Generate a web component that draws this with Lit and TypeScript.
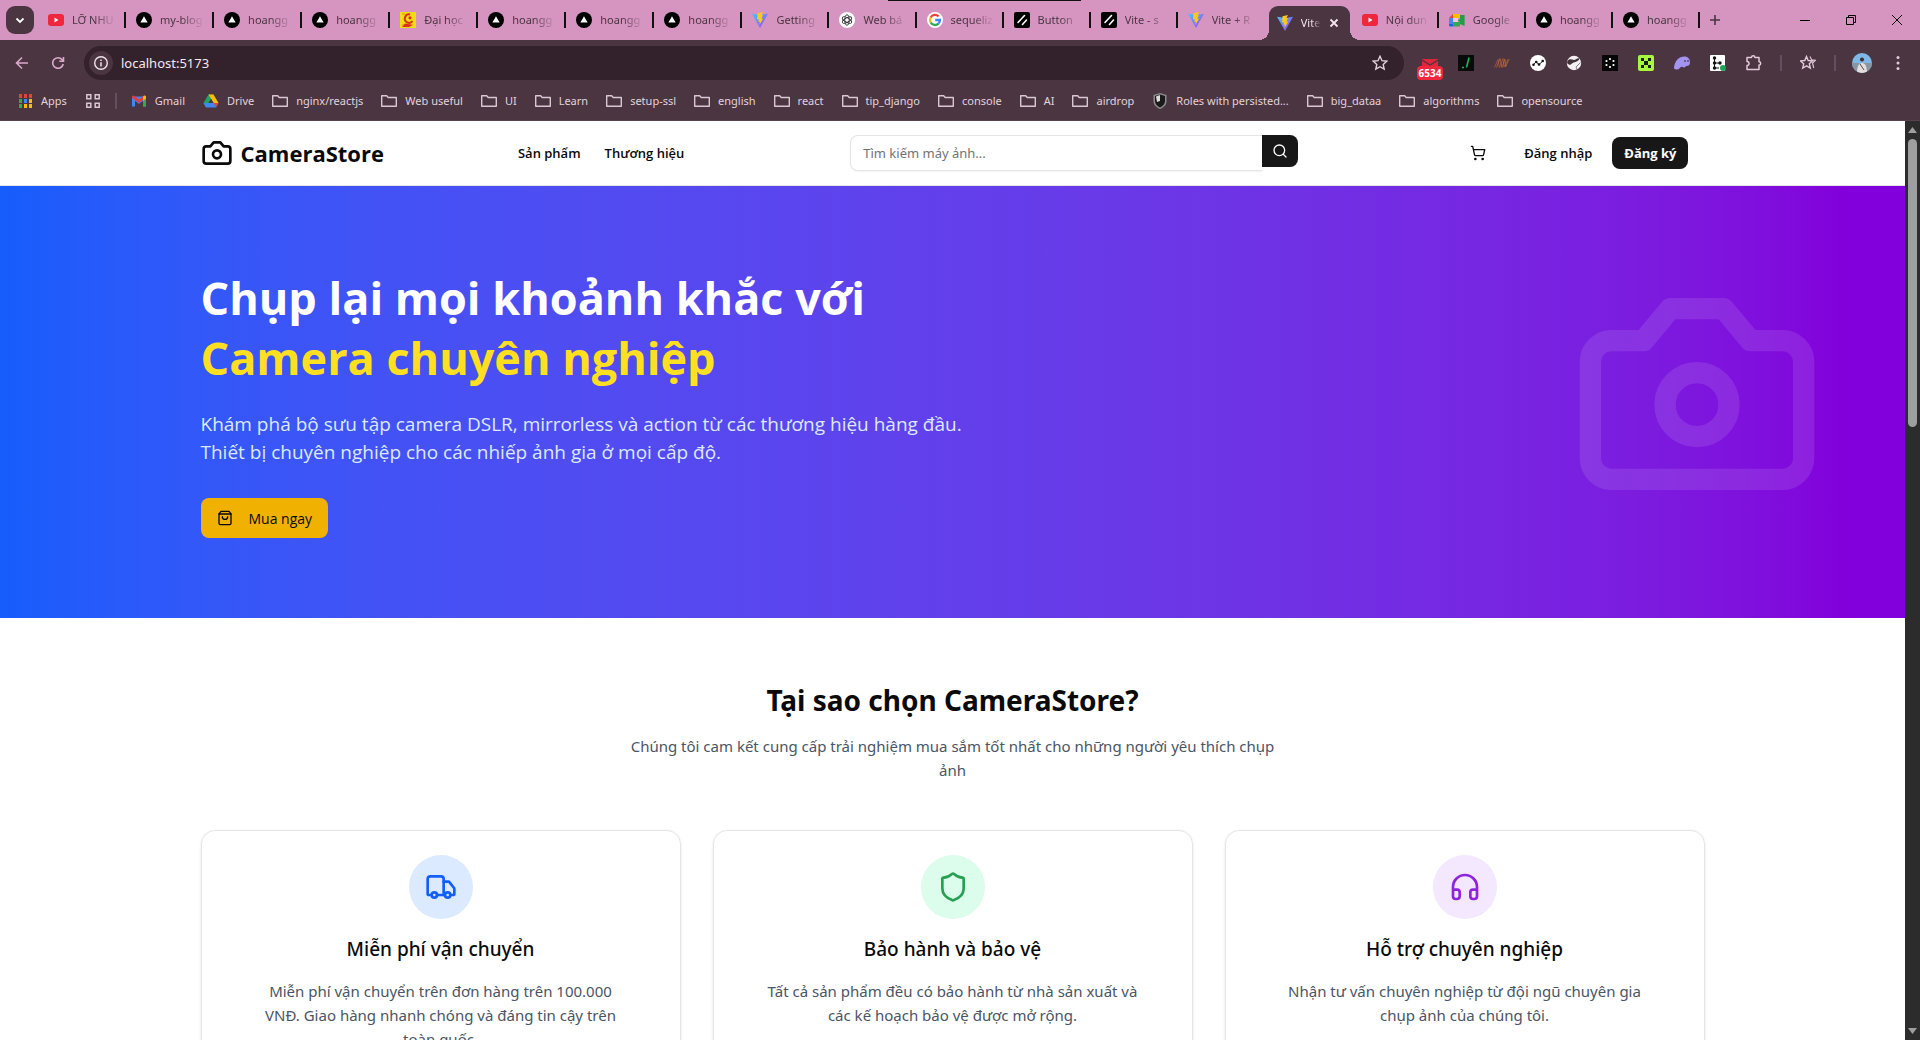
import { LitElement, html, svg, css, nothing, TemplateResult, SVGTemplateResult } from "lit";
import { customElement } from "lit/decorators.js";
import { classMap } from "lit/directives/class-map.js";

const box = (inner: SVGTemplateResult, cls = "i16", view = "0 0 16 16") =>
  html`<svg class=${cls} viewBox=${view} aria-hidden="true">${inner}</svg>`;

const line = (inner: SVGTemplateResult, cls: string) =>
  html`<svg class="line ${cls}" viewBox="0 0 24 24" aria-hidden="true">${inner}</svg>`;

/* ---- site icons ---- */
const camera = svg`<path d="M14.5 4h-5L7 7H4a2 2 0 0 0-2 2v9a2 2 0 0 0 2 2h16a2 2 0 0 0 2-2V9a2 2 0 0 0-2-2h-3l-2.5-3z"/><circle cx="12" cy="13" r="3"/>`;
const search = svg`<circle cx="11" cy="11" r="8"/><path d="m21 21-4.3-4.3"/>`;
const cart = svg`<circle cx="8" cy="21" r="1"/><circle cx="19" cy="21" r="1"/><path d="M2.05 2.05h2l2.66 12.42a2 2 0 0 0 2 1.58h9.78a2 2 0 0 0 1.95-1.57l1.65-7.43H5.12"/>`;
const bag = svg`<path d="M6 2 3 6v14a2 2 0 0 0 2 2h14a2 2 0 0 0 2-2V6l-3-4Z"/><path d="M3 6h18"/><path d="M16 10a4 4 0 0 1-8 0"/>`;
const truck = svg`<path d="M14 18V6a2 2 0 0 0-2-2H4a2 2 0 0 0-2 2v11a1 1 0 0 0 1 1h2"/><path d="M15 18H9"/><path d="M19 18h2a1 1 0 0 0 1-1v-3.65a1 1 0 0 0-.22-.624l-3.48-4.35A1 1 0 0 0 17.52 8H14"/><circle cx="17" cy="18" r="2"/><circle cx="7" cy="18" r="2"/>`;
const shield = svg`<path d="M20 13c0 5-3.5 7.5-7.66 8.95a1 1 0 0 1-.67-.01C7.5 20.5 4 18 4 13V6a1 1 0 0 1 1-1c2 0 4.5-1.2 6.24-2.72a1.17 1.17 0 0 1 1.52 0C14.51 3.81 17 5 19 5a1 1 0 0 1 1 1z"/>`;
const headphones = svg`<path d="M3 14h3a2 2 0 0 1 2 2v3a2 2 0 0 1-2 2H5a2 2 0 0 1-2-2v-7a9 9 0 0 1 18 0v7a2 2 0 0 1-2 2h-1a2 2 0 0 1-2-2v-3a2 2 0 0 1 2-2h3"/>`;

/* ---- favicons ---- */
const fav: Record<string, SVGTemplateResult> = {
  youtube: svg`<rect y="2" width="16" height="12" rx="3" fill="#f0273c"/><path d="M6.5 5.5v5l4-2.5z" fill="#fff"/>`,
  vercel: svg`<circle cx="8" cy="8" r="8" fill="#000"/><path d="M8 4.2 11.6 10.6H4.4z" fill="#fff"/>`,
  school: svg`<rect width="16" height="16" fill="#f2dc13"/><path d="M10 2.500a4.200 4.200 0 1 0 2.500 6.500" fill="none" stroke="#dd2f1c" stroke-width="2"/><circle cx="10" cy="5.800" r="1.600" fill="#dd2f1c"/><path d="M2 15 5 11.500l8 1.200L9 15z" fill="#dd2f1c"/><path d="M2 2h3M2 13h2" stroke="#e98a10"/>`,
  vite: svg`<defs><linearGradient id="v" x1="0" y1="0" x2="1" y2="1"><stop offset="0" stop-color="#41c5ff"/><stop offset="1" stop-color="#a63cf5"/></linearGradient></defs><path d="M0 1.800 8 16 16 1.800 8.500 3z" fill="url(#v)"/><path d="M11 0 5.500 1.200 5 7.500l1.800-.3L6.300 10l1.600-.4L7.300 13l4-6.600-1.900.3L11 3l-1.700.3z" fill="#ffc81e"/>`,
  gpt: svg`<circle cx="8" cy="8" r="8" fill="#fff"/><g fill="none" stroke="#333" stroke-width=".9"><ellipse cx="8" cy="8" rx="2.200" ry="5.200"/><ellipse cx="8" cy="8" rx="2.200" ry="5.200" transform="rotate(60 8 8)"/><ellipse cx="8" cy="8" rx="2.200" ry="5.200" transform="rotate(120 8 8)"/></g>`,
  google: svg`<circle cx="8" cy="8" r="8" fill="#fff"/><g fill="none" stroke-width="2.300"><path d="M11.600 4.400A5 5 0 0 0 3.700 5.500" stroke="#ea4335"/><path d="M3.700 5.500a5 5 0 0 0 0 5" stroke="#fbbc05"/><path d="M3.700 10.500a5 5 0 0 0 7.700 1.200" stroke="#34a853"/><path d="M11.400 11.700A5 5 0 0 0 13 8H8.200" stroke="#4285f4"/></g>`,
  shadcn: svg`<rect width="16" height="16" rx="2" fill="#000"/><path d="M12.500 8 8.500 12.500M10.500 3.500 4 10.500" stroke="#fff" stroke-width="1.600" stroke-linecap="round"/>`,
  meet: svg`<path d="M4 2h7v4H4z" fill="#fbbc04"/><path d="M4 2v4H0z" fill="#ea4335"/><path d="M0 6h4v6H0z" fill="#4285f4"/><path d="M0 12h4v2.500H1.500A1.500 1.500 0 0 1 0 13z" fill="#1967d2"/><path d="M4 10h7v4.500H4z" fill="#34a853"/><path d="M11 3v4L8.500 8.500 11 10v2l4.600 2V3z" fill="#1e9e4a"/><path d="M4 6h5v4H4z" fill="#f4c6dd"/>`,
};

const TABS: [string, string][] = [
  ["youtube", "LỠ NHU"], ["vercel", "my-blog"], ["vercel", "hoangg"], ["vercel", "hoangg"],
  ["school", "Đại học"], ["vercel", "hoangg"], ["vercel", "hoangg"], ["vercel", "hoangg"],
  ["vite", "Getting"], ["gpt", "Web bá"], ["google", "sequeliz"], ["shadcn", "Button"],
  ["shadcn", "Vite - s"], ["vite", "Vite + R"], ["vite", "Vite"], ["youtube", "Nội dun"],
  ["meet", "Google"], ["vercel", "hoangg"], ["vercel", "hoangg"],
];
const ACTIVE = 14;

/* ---- toolbar extension icons ---- */
const EXT: [string, SVGTemplateResult][] = [
  ["Terminal", svg`<rect width="16" height="16" fill="#070b09"/><path d="M11 2.500 8.500 12.500M4 12.500h2" stroke="#1fb455" stroke-width="1.600"/>`],
  ["Notes", svg`<path d="M.5 12.500 4 4.500l1.500 8 3.500-9 1 8.500 4-7.500" fill="none" stroke="#a54c46" stroke-width="1"/><path d="M2.500 12.500 6 3.500l2 9 3-8.500.500 8 3.500-8" fill="none" stroke="#b9762f" stroke-width=".7"/>`],
  ["Graph", svg`<circle cx="8" cy="8" r="8" fill="#fff"/><path d="M3 10 6 7l3 2.500L13 6" fill="none" stroke="#111" stroke-width=".9"/><g fill="#111"><circle cx="3.500" cy="9.800" r="1.300"/><circle cx="6.200" cy="7" r="1.300"/><circle cx="9" cy="9.500" r="1.300"/><circle cx="12.700" cy="6" r="1.300"/></g>`],
  ["Globe", svg`<circle cx="8" cy="8" r="7.200" fill="#f4eff2"/><path d="M1.500 6C4 3 6 5 8 5s3-2.500 5.800-1.500C11 8 8 6.500 6 8.500S3 10 1 8z" fill="#43333d"/><path d="M14.500 7.500 10 12l1 2.500" fill="none" stroke="#8b7d86"/>`],
  ["Dots", svg`<rect width="16" height="16" fill="#060606"/><g fill="#fff"><circle cx="8" cy="4" r="1.100"/><circle cx="8" cy="12" r="1.100"/><circle cx="4.500" cy="6" r="1.100"/><circle cx="11.500" cy="6" r="1.100"/><circle cx="4.500" cy="10" r="1.100"/><circle cx="11.500" cy="10" r="1.100"/></g>`],
  ["Grid", svg`<rect width="16" height="16" rx="2" fill="#a6f83f"/><path d="M3 3h3v3H3zM10 3h3v3h-3zM6 6h4v4H6zM3 10h3v3H3zM10 10h3v3h-3z" fill="#16230a"/>`],
  ["Ghost", svg`<path d="M0 14C0 6 5 1.500 10.500 1.500 14 1.500 16 4 16 7c0 3-1.500 4-3.500 4-1 0-1 1.500-2.500 1.500S8 11.500 7 12s-2 2.500-4 2.500S1 13 0 14z" fill="#a394f1"/><path d="M11 5v2M14 5v2" stroke="#4b3742" stroke-width="1.200"/>`],
  ["Tree", svg`<rect width="15" height="16" rx="1" fill="#fff"/><path d="M4.500 3v10M4.500 8H10M4.500 13H9" stroke="#111" stroke-width="1"/><g fill="#111"><circle cx="4.500" cy="3" r="1.700"/><circle cx="4.500" cy="8" r="1.700"/><circle cx="4.500" cy="13" r="1.700"/><circle cx="10" cy="8" r="1.700"/></g><circle cx="13" cy="13" r="3" fill="#1fa35a"/>`],
];

const folder = svg`<path d="M.7 2.800h5l1.500 1.700h8.100v8.700H.7z" fill="none" stroke="#d9c8d3" stroke-width="1.400" stroke-linejoin="round"/>`;
const gmail = svg`<path d="M1 3.500v10h3V8l4 3 4-3v5.500h3v-10z" fill="#4285f4"/><path d="M12 13.500h3V4l-3 3z" fill="#34a853"/><path d="M1 4.500 8 10l7-5.500V4a1.500 1.500 0 0 0-2.500-1L8 6.500 3.500 3A1.500 1.500 0 0 0 1 4z" fill="#ea3a35"/><path d="M12 4v4l3-2.500V4a1.500 1.500 0 0 0-3 0z" fill="#fbbc04"/><path d="M4 8.200 8 11.200l4-3v5.300H4z" fill="#4a3541"/>`;
const drive = svg`<path d="M5.500 1.500h5L5.200 11l-2.600 3L.5 10z" fill="#1fa463"/><path d="M5.500 1.500h5l5 8.500h-5z" fill="#fbbc04"/><path d="M.5 10h15l-2.500 4.500H3z" fill="#4285f4"/><path d="M8 6 5.500 10h5z" fill="#4b3742"/><path d="M10.500 10h5L13 14z" fill="#ea4335"/>`;
const roles = svg`<path d="M8 0 14.500 2v6c0 4-3 6.500-6.500 8C4.500 14.500 1.500 12 1.500 8V2z" fill="#8c8c8c"/><path d="M8 1.500 13 3v5c0 3-2 5-5 6.500C5 13 3 11 3 8V3z" fill="#1a1a1a"/><path d="M4 3.500 8 2v6L5 9z" fill="#dcdcdc"/>`;

const BOOKMARKS: [string, SVGTemplateResult][] = [
  ["Gmail", gmail], ["Drive", drive], ["nginx/reactjs", folder], ["Web useful", folder], ["UI", folder],
  ["Learn", folder], ["setup-ssl", folder], ["english", folder], ["react", folder], ["tip_django", folder],
  ["console", folder], ["AI", folder], ["airdrop", folder], ["Roles with persisted...", roles],
  ["big_dataa", folder], ["algorithms", folder], ["opensource", folder],
];

const APP_DOTS = ["#e94235", "#e94235", "#e94235", "#34a853", "#4285f4", "#fbbc04", "#34a853", "#fbbc04", "#fbbc04"];

@customElement("browser-chrome")
export class BrowserChrome extends LitElement {
  static styles = css`
    :host { display: block; font-family: "Noto Sans", "Open Sans", sans-serif; background: #4a3541; color: #e3d3dd; }
    button { font: inherit; color: inherit; background: none; border: 0; padding: 0; display: grid; place-items: center; flex: none; }
    a { color: inherit; text-decoration: none; }
    svg { display: block; flex: none; }
    .i10 { width: 10px; height: 10px; }
    .i16 { width: 16px; height: 16px; }
    .i20 { width: 20px; height: 20px; }

    .strip { position: relative; display: flex; align-items: center; height: 40px; background: #d694c0; color: #4a3541; }
    .drag { position: absolute; left: 888px; top: 0; width: 193px; height: 1px; background: #111; }
    .finder { width: 28px; height: 28px; margin: 0 4px 0 6px; border-radius: 9px; background: #4a3541; color: #fff; }
    .tabs { flex: 1; min-width: 0; display: grid; grid-template-columns: repeat(8, minmax(0, 88fr)) repeat(11, minmax(0, 87fr)); height: 40px; }
    .tab { display: flex; align-items: center; gap: 8px; padding-left: 10px; font-size: 11px; min-width: 0; }
    .title { flex: 1; min-width: 0; overflow: hidden; white-space: nowrap; line-height: 20px; mask-image: linear-gradient(to right, #000 50%, transparent); }
    .tab::after { content: ""; width: 2px; height: 16px; background: #111; }
    .tab.quiet::after { background: none; }
    .tab.active { position: relative; height: 34px; margin: 6px 2px 0 4px; padding: 0 11px 0 8px; border-radius: 9px 9px 0 0; background: #4a3541; color: #f3e6ee; }
    .tab.active::before, .tab.active::after { content: ""; position: absolute; bottom: 0; width: 10px; height: 10px; }
    .tab.active::before { right: 100%; background: radial-gradient(circle at 0 0, transparent 10px, #4a3541 10px); }
    .tab.active::after { left: 100%; background: radial-gradient(circle at 100% 0, transparent 10px, #4a3541 10px); }
    .new { width: 28px; height: 28px; margin: 0 53px 0 1px; }
    .win { width: 46px; height: 32px; color: #000; }

    .bar { display: flex; align-items: center; height: 46px; padding: 0 4px; }
    .nav { width: 36px; height: 34px; color: #dba9cb; }
    .nav.pale { color: #e3c9da; }
    .omni { flex: 1; display: flex; align-items: center; height: 34px; margin: 0 8px; padding: 0 16px 0 5px; border-radius: 17px; background: #33212c; }
    .info { width: 24px; height: 24px; border-radius: 12px; background: #4a3541; color: #f0e4ec; }
    .url { flex: 1; min-width: 0; margin: 0 8px; padding: 0; border: 0; outline: 0; background: none; color: #f4e9f1; font: 13px "Noto Sans", sans-serif; }
    .star { color: #e3d3dd; }
    .mail { display: flex; flex-direction: column; align-items: center; justify-content: flex-end; }
    .badge { padding: 0 2px; border-radius: 4px; background: #f0273c; color: #fff; font: 700 10px/14px "Open Sans", sans-serif; }
    .rule { width: 2px; height: 16px; margin: 0 8px; background: #63505c; flex: none; }

    .marks { box-sizing: border-box; display: flex; align-items: center; gap: 18px; height: 35px; padding: 0 17px 5px; border-bottom: 1px solid #55424d; overflow: hidden; font-size: 11px; line-height: 16px; white-space: nowrap; }
    .mark { display: flex; align-items: center; gap: 8px; flex: none; }
    .marks .rule { margin: 0 -4px; }
  `;

  private tab([icon, title]: [string, string], i: number) {
    const active = i === ACTIVE;
    return html`<div role="tab" aria-selected=${active} class=${classMap({ tab: true, active, quiet: i === ACTIVE - 1 })}>
      ${box(fav[icon])}<span class="title">${title}</span>
      ${active ? html`<button aria-label="Close tab">${box(svg`<path d="M1.500 1.500 8.500 8.500M8.500 1.500 1.500 8.500" stroke="currentColor" stroke-width="1.800"/>`, "i10", "0 0 10 10")}</button>` : nothing}
    </div>`;
  }

  render() {
    return html`
      <div class="strip">
        <button class="finder" aria-label="Search tabs">${box(svg`<path d="m4.500 6.500 3.500 3.500 3.500-3.500" fill="none" stroke="currentColor" stroke-width="1.800"/>`)}</button>
        <div class="tabs" role="tablist">${TABS.map((t, i) => this.tab(t, i))}</div>
        <button class="new" aria-label="New tab">${box(svg`<path d="M8 3v10M3 8h10" stroke="currentColor" stroke-width="1.600"/>`)}</button>
        <button class="win" aria-label="Minimize">${box(svg`<path d="M3 8.500h10" stroke="currentColor"/>`)}</button>
        <button class="win" aria-label="Restore">${box(svg`<path d="M3.500 5.500h7v7h-7zM5.500 5V3.500h7v7H11" fill="none" stroke="currentColor"/>`)}</button>
        <button class="win" aria-label="Close">${box(svg`<path d="m3 3 10 10M13 3 3 13" stroke="currentColor"/>`)}</button>
        <div class="drag"></div>
      </div>
      <div class="bar">
        <button class="nav" aria-label="Back">${box(svg`<path d="M14 8H3M8 2.500 2.500 8 8 13.500" fill="none" stroke="currentColor" stroke-width="1.600"/>`)}</button>
        <button class="nav" aria-label="Reload">${box(svg`<path d="M13.200 9A5.300 5.300 0 1 1 12 4.500L13.500 6M13.500 2v4.200H9.300" fill="none" stroke="currentColor" stroke-width="1.600"/>`)}</button>
        <div class="omni">
          <button class="info" aria-label="Site information">${box(svg`<circle cx="8" cy="8" r="6.300" fill="none" stroke="currentColor" stroke-width="1.400"/><path d="M8 7.200V11.500M8 4.500V6" stroke="currentColor" stroke-width="1.500"/>`)}</button>
          <input class="url" aria-label="Address" value="localhost:5173" />
          <button class="star" aria-label="Bookmark this page">${box(svg`<path d="m8 1.300 2 4.400 4.800.5-3.600 3.200 1 4.700L8 11.700l-4.200 2.400 1-4.700L1.200 6.200 6 5.700z" fill="none" stroke="currentColor" stroke-width="1.400"/>`)}</button>
        </div>
        <button class="nav mail" aria-label="Mail">
          <svg width="16" height="7" viewBox="0 0 16 7" aria-hidden="true"><path d="M0 0h16v7H0z" fill="#e0263a"/><path d="m0 1 8 5 8-5" fill="none" stroke="#4a3541" stroke-width="1.200"/></svg>
          <span class="badge">6534</span>
        </button>
        ${EXT.map(([name, icon]) => html`<button class="nav" aria-label=${name}>${box(icon)}</button>`)}
        <button class="nav pale" aria-label="Extensions">${box(svg`<path d="M1 2.500h4.500a1.700 1.700 0 0 1 3.400 0H13v4.200a1.700 1.700 0 0 1 0 3.400v4.400H1V10.500a2 2 0 0 0 0-4z" fill="none" stroke="currentColor" stroke-width="1.500" stroke-linejoin="round"/>`)}</button>
        <span class="rule"></span>
        <button class="nav pale" aria-label="Bookmarks">${box(svg`<path d="m6.500 1.500 1.700 4 4.300.4-3.200 2.900 1 4.200-3.800-2.200L2.700 13l1-4.200L.5 5.900l4.300-.4z" fill="none" stroke="currentColor" stroke-width="1.400"/><path d="m10 1.500 1.500 3.300 4 .4-3 2.800 1.300 5" fill="none" stroke="currentColor" stroke-width="1.100"/>`)}</button>
        <span class="rule"></span>
        <button class="nav" aria-label="Profile">${box(svg`<defs><clipPath id="p"><circle cx="10" cy="10" r="10"/></clipPath></defs><g clip-path="url(#p)"><path d="M0 0h20v20H0z" fill="#7fb8e6"/><path d="M0 10h20v10H0z" fill="#8796a3"/><circle cx="10" cy="6.500" r="2" fill="#3d2d2b"/><path d="M5 20c0-6 1.500-10 5-10s5 4 5 10z" fill="#e4dedd"/><path d="m8 11 4 6" stroke="#5d4a48"/></g>`, "i20", "0 0 20 20")}</button>
        <button class="nav pale" aria-label="Menu">${box(svg`<g fill="currentColor"><circle cx="8" cy="2.500" r="1.500"/><circle cx="8" cy="8" r="1.500"/><circle cx="8" cy="13.500" r="1.500"/></g>`)}</button>
      </div>
      <nav class="marks" aria-label="Bookmarks bar">
        <a class="mark" href="#apps">${box(svg`${APP_DOTS.map((c, i) => svg`<rect x=${2 + (i % 3) * 5} y=${1 + Math.floor(i / 3) * 5} width="3" height="4" fill=${c}/>`)}`)}Apps</a>
        <button aria-label="Tab groups">${box(svg`<g fill="none" stroke="#d9c8d3" stroke-width="1.500"><path d="M1.800 1.800h4v4h-4zM10.200 1.800h4v4h-4zM1.800 10.200h4v4h-4zM10.200 10.200h4v4h-4z"/></g>`)}</button>
        <span class="rule"></span>
        ${BOOKMARKS.map(([name, icon]) => html`<a class="mark" href="#bookmark">${box(icon)}${name}</a>`)}
      </nav>`;
  }
}

const FEATURES: [string, SVGTemplateResult, string, string][] = [
  ["blue", truck, "Miễn phí vận chuyển", "Miễn phí vận chuyển trên đơn hàng trên 100.000 VNĐ. Giao hàng nhanh chóng và đáng tin cậy trên toàn quốc."],
  ["green", shield, "Bảo hành và bảo vệ", "Tất cả sản phẩm đều có bảo hành từ nhà sản xuất và các kế hoạch bảo vệ được mở rộng."],
  ["purple", headphones, "Hỗ trợ chuyên nghiệp", "Nhận tư vấn chuyên nghiệp từ đội ngũ chuyên gia chụp ảnh của chúng tôi."],
];

@customElement("store-page")
export class StorePage extends LitElement {
  static styles = css`
    :host { display: block; background: #fff; color: #0a0a0a; font-family: "Open Sans", "Noto Sans", sans-serif; }
    h1, h2, h3, p { margin: 0; }
    a { color: inherit; text-decoration: none; }
    button { font: inherit; color: inherit; background: none; border: 0; padding: 0; }
    svg { display: block; flex: none; }
    .line { fill: none; stroke: currentColor; stroke-width: 2; stroke-linecap: round; stroke-linejoin: round; }
    .s16 { width: 16px; height: 16px; }
    .s32 { width: 32px; height: 32px; }
    .wrap { box-sizing: border-box; max-width: 1536px; margin: 0 auto; padding: 0 16px; }

    header { border-bottom: 1px solid #e5e5e5; font-size: 13px; font-weight: 600; line-height: 20px; }
    header .wrap { display: flex; align-items: center; justify-content: space-between; height: 64px; }
    .logo { display: flex; align-items: center; gap: 8px; font-size: 22px; font-weight: 700; line-height: 32px; }
    .links { display: flex; padding: 0 12px; gap: 24px; }
    .find { flex: 0 1 448px; display: flex; align-items: flex-start; margin: 0 32px; }
    .find input { flex: 1; min-width: 0; height: 36px; box-sizing: border-box; padding: 0 12px; border: 1px solid #e5e5e5; border-right: 0; border-radius: 8px 0 0 8px; box-shadow: 0 1px 2px #0000000d; outline: 0; font: 400 13px "Noto Sans", sans-serif; color: inherit; }
    .find input::placeholder { color: #737373; opacity: 1; }
    .find button { width: 36px; height: 32px; border-radius: 0 8px 8px 0; background: #171717; color: #fff; display: grid; place-items: center; }
    .actions { display: flex; align-items: center; gap: 8px; padding-right: 16px; }
    .cart { width: 52px; height: 36px; display: grid; place-items: center; }
    .login { padding: 6px 12px; }
    .join { padding: 6px 12px; border-radius: 8px; background: #171717; color: #fff; font-weight: 700; }

    .hero { position: relative; padding: 80px 0; background: linear-gradient(to right in oklab, #155dfc, #8200db 97%); color: #fff; }
    h1 { padding-top: 2px; font-size: 45px; line-height: 60px; font-weight: 700; }
    h1 span { display: block; color: #ffdf20; }
    .lead { max-width: 768px; margin: 22px 0 32px; font-size: 19px; line-height: 28px; color: #dbeafe; }
    .buy { display: flex; align-items: center; gap: 16px; height: 40px; padding: 0 16px; border-radius: 8px; background: #f0b100; color: #0a0a0a; font-size: 14px; font-weight: 500; }
    .ghost { position: absolute; right: 80px; top: 80px; width: 256px; height: 256px; opacity: 0.1; }

    .why { padding: 64px 0; text-align: center; font-family: "Noto Sans", sans-serif; }
    h2 { font-size: 28px; line-height: 36px; font-weight: 700; }
    .sub { max-width: 672px; margin: 16px auto 48px; font-size: 15px; line-height: 24px; color: #4a5565; }
    .cards { display: grid; grid-template-columns: repeat(3, minmax(0, 1fr)); gap: 32px; }
    .card { padding: 24px 50px; border: 1px solid #e5e5e5; border-radius: 14px; box-shadow: 0 1px 3px #0000001a; }
    .disc { width: 64px; height: 64px; margin: 0 auto 16px; border-radius: 50%; display: grid; place-items: center; }
    .blue { background: #dbeafe; color: #155dfc; }
    .green { background: #dcfcec; color: #26a052; }
    .purple { background: #f3e8ff; color: #8e24dc; }
    h3 { font-size: 19px; line-height: 28px; font-weight: 500; margin-bottom: 16px; }
    .card p { font-size: 15px; line-height: 24px; color: #4a5565; }
  `;

  private feature([tone, icon, title, text]: [string, SVGTemplateResult, string, string]): TemplateResult {
    return html`<article class="card"><div class="disc ${tone}">${line(icon, "s32")}</div><h3>${title}</h3><p>${text}</p></article>`;
  }

  render() {
    return html`
      <header>
        <div class="wrap">
          <a class="logo" href="#home">${line(camera, "s32")}CameraStore</a>
          <nav class="links"><a href="#products">Sản phẩm</a><a href="#brands">Thương hiệu</a></nav>
          <form class="find" role="search">
            <input type="search" aria-label="Tìm kiếm máy ảnh" placeholder="Tìm kiếm máy ảnh..." />
            <button type="button" aria-label="Tìm kiếm">${line(search, "s16")}</button>
          </form>
          <div class="actions">
            <button class="cart" aria-label="Giỏ hàng">${line(cart, "s16")}</button>
            <button class="login">Đăng nhập</button>
            <button class="join">Đăng ký</button>
          </div>
        </div>
      </header>
      <section class="hero">
        <div class="wrap">
          <h1>Chụp lại mọi khoảnh khắc với <span>Camera chuyên nghiệp</span></h1>
          <p class="lead">Khám phá bộ sưu tập camera DSLR, mirrorless và action từ các thương hiệu hàng đầu. Thiết bị chuyên nghiệp cho các nhiếp ảnh gia ở mọi cấp độ.</p>
          <button class="buy">${line(bag, "s16")}Mua ngay</button>
        </div>
        ${line(camera, "ghost")}
      </section>
      <section class="why">
        <div class="wrap">
          <h2>Tại sao chọn CameraStore?</h2>
          <p class="sub">Chúng tôi cam kết cung cấp trải nghiệm mua sắm tốt nhất cho những người yêu thích chụp ảnh</p>
          <div class="cards">${FEATURES.map((f) => this.feature(f))}</div>
        </div>
      </section>`;
  }
}

@customElement("app-root")
export class AppRoot extends LitElement {
  static styles = css`
    :host { display: flex; flex-direction: column; height: 100vh; overflow: hidden; background: #fff; }
    browser-chrome { flex: none; }
    .view { flex: 1; min-height: 0; display: flex; }
    store-page { flex: 1; min-width: 0; overflow: hidden; }
    .scroll { width: 15px; display: flex; flex-direction: column; align-items: center; gap: 6px; padding: 6px 0; box-sizing: border-box; background: #2c2c2c; }
    .scroll svg { display: block; fill: #9f9f9f; }
    .track { flex: 1; }
    .thumb { width: 9px; height: 288px; border-radius: 5px; background: #9f9f9f; }
  `;

  render() {
    return html`
      <browser-chrome></browser-chrome>
      <div class="view">
        <store-page></store-page>
        <div class="scroll" aria-hidden="true">
          <svg width="9" height="6" viewBox="0 0 9 6"><path d="M4.500 0 9 6H0z"/></svg>
          <div class="track"><div class="thumb"></div></div>
          <svg width="9" height="6" viewBox="0 0 9 6"><path d="M4.500 6 9 0H0z"/></svg>
        </div>
      </div>`;
  }
}
